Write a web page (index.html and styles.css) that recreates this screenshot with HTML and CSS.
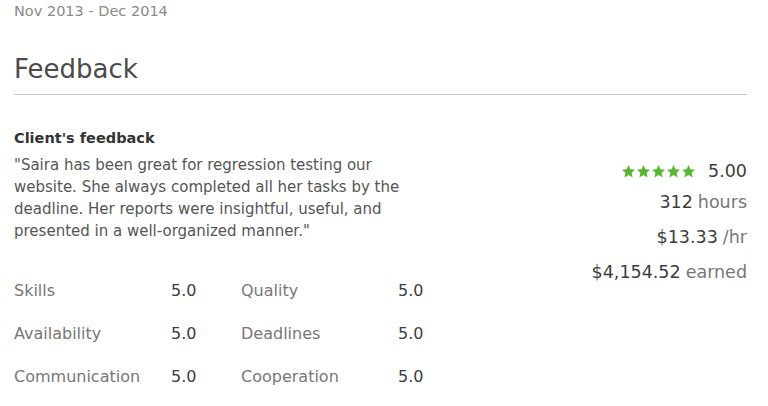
FILE: index.html
```html
<!DOCTYPE html>
<html>
<head>
<meta charset="utf-8">
<link rel="stylesheet" href="styles.css">
</head>
<body>
<div class="page">
  <div class="date">Nov 2013 - Dec 2014</div>
  <h2 class="title">Feedback</h2>
  <div class="feedback">
    <div class="left">
      <h4 class="sub">Client's feedback</h4>
      <p class="quote">"Saira has been great for regression testing our website. She always completed all her tasks by the deadline. Her reports were insightful, useful, and presented in a well-organized manner."</p>
      <div class="scores">
        <span class="label">Skills</span><span class="val">5.0</span>
        <span class="label">Quality</span><span class="val">5.0</span>
        <span class="label">Availability</span><span class="val">5.0</span>
        <span class="label">Deadlines</span><span class="val">5.0</span>
        <span class="label">Communication</span><span class="val">5.0</span>
        <span class="label">Cooperation</span><span class="val">5.0</span>
      </div>
    </div>
    <div class="right">
      <div class="stat rating">
        <span class="stars">
          <svg viewBox="0 0 24 24"><path d="M12 1.5l3.1 6.9 7.4.7-5.6 5 1.7 7.4L12 17.6l-6.6 3.9 1.7-7.4-5.6-5 7.4-.7z"/></svg>
          <svg viewBox="0 0 24 24"><path d="M12 1.5l3.1 6.9 7.4.7-5.6 5 1.7 7.4L12 17.6l-6.6 3.9 1.7-7.4-5.6-5 7.4-.7z"/></svg>
          <svg viewBox="0 0 24 24"><path d="M12 1.5l3.1 6.9 7.4.7-5.6 5 1.7 7.4L12 17.6l-6.6 3.9 1.7-7.4-5.6-5 7.4-.7z"/></svg>
          <svg viewBox="0 0 24 24"><path d="M12 1.5l3.1 6.9 7.4.7-5.6 5 1.7 7.4L12 17.6l-6.6 3.9 1.7-7.4-5.6-5 7.4-.7z"/></svg>
          <svg viewBox="0 0 24 24"><path d="M12 1.5l3.1 6.9 7.4.7-5.6 5 1.7 7.4L12 17.6l-6.6 3.9 1.7-7.4-5.6-5 7.4-.7z"/></svg>
        </span>
        <span class="strong">5.00</span>
      </div>
      <div class="stat"><span class="strong">312</span> <span class="muted">hours</span></div>
      <div class="stat"><span class="strong">$13.33</span> <span class="muted">/hr</span></div>
      <div class="stat"><span class="strong">$4,154.52</span> <span class="muted">earned</span></div>
    </div>
  </div>
</div>
</body>
</html>
```
FILE: styles.css
```css
html, body {
  margin: 0;
  padding: 0;
  background: #fff;
}
body {
  font-family: "DejaVu Sans", "Liberation Sans", sans-serif;
  color: #555;
}
.page {
  padding: 0 21px 0 14px;
}
.date {
  font-size: 14.5px;
  line-height: 22px;
  color: #8a8a8a;
}
.title {
  margin: 31px 0 0;
  font-size: 26px;
  font-weight: 400;
  line-height: 32px;
  color: #4a4a4a;
  padding-bottom: 9px;
  border-bottom: 1px solid #c8c8c8;
}
.feedback {
  display: flex;
  justify-content: space-between;
  margin-top: 32px;
}
.left {
  width: 410px;
}
.sub {
  margin: 0;
  font-size: 14.5px;
  font-weight: 700;
  line-height: 22px;
  color: #333;
}
.quote {
  margin: 5px 0 0;
  font-size: 15px;
  line-height: 22px;
  color: #555;
}
.scores {
  display: grid;
  grid-template-columns: 157px 70px 157px 40px;
  row-gap: 21px;
  margin-top: 38px;
  font-size: 16px;
  line-height: 22px;
}
.label {
  color: #777;
}
.val {
  color: #3d3d3d;
}
.right {
  display: flex;
  flex-direction: column;
  align-items: flex-end;
  padding-top: 33px;
  gap: 13px;
}
.stat {
  font-size: 17.5px;
  line-height: 22px;
  display: flex;
  align-items: center;
  gap: 5px;
}
.rating {
  gap: 12px;
  margin-bottom: -4px;
}
.stars {
  display: flex;
  gap: 0;
}
.stars svg {
  width: 15px;
  height: 15px;
  fill: #57b82f;
}
.strong {
  color: #3d3d3d;
}
.muted {
  color: #777;
}
```
